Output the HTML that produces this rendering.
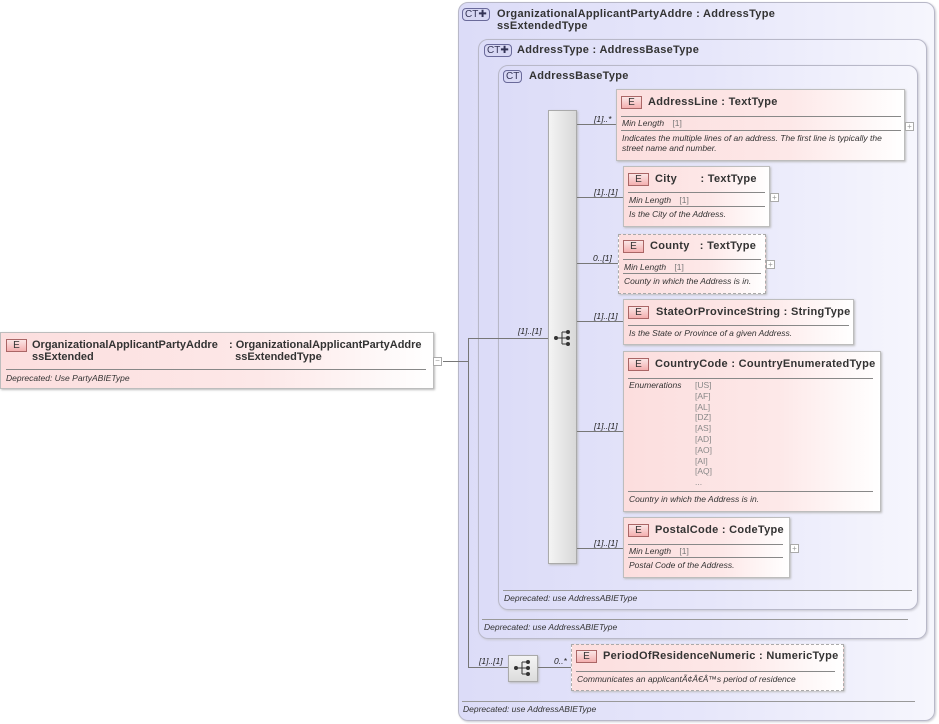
<!DOCTYPE html>
<html><head><meta charset="utf-8">
<style>
*{box-sizing:border-box;margin:0;padding:0}
body{width:939px;height:724px;background:#fff;position:relative;overflow:hidden;font-family:"Liberation Sans",Arial,sans-serif;color:#333}
.a{position:absolute}
.ct{position:absolute;border:1px solid #b8b8c8;border-radius:10px;background:linear-gradient(90deg,#dcdcf8 0%,#e6e6fa 50%,#f6f6fd 100%);box-shadow:1px 1px 2px #c8c8d0}
.badge{position:absolute;height:13px;border:1px solid #6a6a9a;border-radius:4px;background:#d8d8f4;font-size:10px;line-height:11px;color:#335;padding:0 2px}
.t{position:absolute;font-size:11px;font-weight:bold;color:#333;line-height:12px;white-space:nowrap;letter-spacing:0.3px}
.el{position:absolute;border:1px solid #bdbdbd;background:linear-gradient(90deg,#fcdede 0%,#fde8e8 60%,#fff 100%);box-shadow:1px 1px 2px #bbb}
.dash{border:1px dashed #aaa}
.eb{position:absolute;width:21px;height:13px;border:1px solid #a66;background:linear-gradient(#fbe6e6,#f4b0b0);font-size:10px;line-height:11px;text-align:center;color:#333}
.hl{position:absolute;height:1px;background:#888}
.i{position:absolute;font-size:8.5px;font-style:italic;color:#333;white-space:nowrap;line-height:10px}
.g{position:absolute;font-size:8.5px;color:#888;line-height:10.8px}
.ln{position:absolute;background:#777}
.m{position:absolute;font-size:8.5px;font-style:italic;color:#222;white-space:nowrap}
.pl{position:absolute;width:9px;height:9px;border:1px solid #aaa;background:#fff;font-size:8px;line-height:7px;text-align:center;color:#999}
.ft{position:absolute;font-size:8.5px;font-style:italic;color:#333}
</style></head><body>

<div class="ct" style="left:458px;top:2px;width:477px;height:719px"></div>
<div class="badge" style="left:462px;top:8px">CT✚</div>
<div class="t" style="left:497px;top:8px">OrganizationalApplicantPartyAddre : AddressType<br>ssExtendedType</div>

<div class="ct" style="left:478px;top:39px;width:449px;height:600px"></div>
<div class="badge" style="left:484px;top:44px">CT✚</div>
<div class="t" style="left:517px;top:44px">AddressType : AddressBaseType</div>

<div class="ct" style="left:498px;top:65px;width:420px;height:545px"></div>
<div class="badge" style="left:503px;top:70px">CT</div>
<div class="t" style="left:529px;top:70px">AddressBaseType</div>

<div class="hl" style="left:503px;top:590px;width:409px;background:#999"></div>
<div class="ft" style="left:504px;top:593px">Deprecated: use AddressABIEType</div>
<div class="hl" style="left:482px;top:619px;width:426px;background:#999"></div>
<div class="ft" style="left:484px;top:622px">Deprecated: use AddressABIEType</div>
<div class="hl" style="left:462px;top:701px;width:453px;background:#999"></div>
<div class="ft" style="left:463px;top:704px">Deprecated: use AddressABIEType</div>

<div class="a" style="left:548px;top:110px;width:29px;height:454px;border:1px solid #aaa;background:linear-gradient(90deg,#f4f4f4,#d8d8d8);box-shadow:1px 1px 2px #bbb"></div>
<svg class="a" style="left:553px;top:329px" width="20" height="18" viewBox="0 0 20 18"><circle cx="3" cy="9" r="2" fill="#333"/><line x1="3" y1="9" x2="9" y2="9" stroke="#333"/><line x1="9" y1="3" x2="9" y2="15" stroke="#333"/><line x1="9" y1="3" x2="15" y2="3" stroke="#333"/><line x1="9" y1="9" x2="15" y2="9" stroke="#333"/><line x1="9" y1="15" x2="15" y2="15" stroke="#333"/><circle cx="15" cy="3" r="2" fill="#333"/><circle cx="15" cy="9" r="2" fill="#333"/><circle cx="15" cy="15" r="2" fill="#333"/></svg>

<div class="ln" style="left:577px;top:124px;width:39px;height:1px"></div><div class="m" style="left:594px;top:114px">[1]..*</div>
<div class="ln" style="left:577px;top:197px;width:46px;height:1px"></div><div class="m" style="left:594px;top:187px">[1]..[1]</div>
<div class="ln" style="left:577px;top:263px;width:41px;height:1px"></div><div class="m" style="left:593px;top:253px">0..[1]</div>
<div class="ln" style="left:577px;top:321px;width:46px;height:1px"></div><div class="m" style="left:594px;top:311px">[1]..[1]</div>
<div class="ln" style="left:577px;top:431px;width:46px;height:1px"></div><div class="m" style="left:594px;top:421px">[1]..[1]</div>
<div class="ln" style="left:577px;top:548px;width:46px;height:1px"></div><div class="m" style="left:594px;top:538px">[1]..[1]</div>

<div class="el" style="left:616px;top:89px;width:289px;height:72px"></div>
<div class="eb" style="left:621px;top:96px">E</div>
<div class="t" style="left:648px;top:96px">AddressLine : TextType</div>
<div class="hl" style="left:621px;top:116px;width:280px"></div>
<div class="i" style="left:622px;top:118px">Min Length <span style="font-style:normal;color:#777;margin-left:6px">[1]</span></div>
<div class="hl" style="left:621px;top:130px;width:280px"></div>
<div class="i" style="left:622px;top:133px">Indicates the multiple lines of an address. The first line is typically the<br>street name and number.</div>
<div class="pl" style="left:905px;top:122px">+</div>

<div class="el" style="left:623px;top:166px;width:147px;height:61px"></div>
<div class="eb" style="left:628px;top:173px">E</div>
<div class="t" style="left:655px;top:173px">City&nbsp;&nbsp;&nbsp;&nbsp;&nbsp;&nbsp;&nbsp;: TextType</div>
<div class="hl" style="left:628px;top:192px;width:137px"></div>
<div class="i" style="left:629px;top:195px">Min Length <span style="font-style:normal;color:#777;margin-left:6px">[1]</span></div>
<div class="hl" style="left:628px;top:206px;width:137px"></div>
<div class="i" style="left:629px;top:209px">Is the City of the Address.</div>
<div class="pl" style="left:770px;top:193px">+</div>

<div class="el dash" style="left:618px;top:234px;width:148px;height:60px"></div>
<div class="eb" style="left:623px;top:240px">E</div>
<div class="t" style="left:650px;top:240px">County&nbsp;&nbsp;&nbsp;: TextType</div>
<div class="hl" style="left:623px;top:259px;width:138px"></div>
<div class="i" style="left:624px;top:262px">Min Length <span style="font-style:normal;color:#777;margin-left:6px">[1]</span></div>
<div class="hl" style="left:623px;top:273px;width:138px"></div>
<div class="i" style="left:624px;top:276px">County in which the Address is in.</div>
<div class="pl" style="left:766px;top:260px">+</div>

<div class="el" style="left:623px;top:299px;width:231px;height:46px"></div>
<div class="eb" style="left:628px;top:306px">E</div>
<div class="t" style="left:656px;top:306px">StateOrProvinceString : StringType</div>
<div class="hl" style="left:628px;top:325px;width:221px"></div>
<div class="i" style="left:629px;top:328px">Is the State or Province of a given Address.</div>

<div class="el" style="left:623px;top:351px;width:258px;height:161px"></div>
<div class="eb" style="left:628px;top:358px">E</div>
<div class="t" style="left:655px;top:358px">CountryCode : CountryEnumeratedType</div>
<div class="hl" style="left:628px;top:378px;width:245px"></div>
<div class="i" style="left:629px;top:380px">Enumerations</div>
<div class="g" style="left:695px;top:380px">[US]<br>[AF]<br>[AL]<br>[DZ]<br>[AS]<br>[AD]<br>[AO]<br>[AI]<br>[AQ]<br>...</div>
<div class="hl" style="left:628px;top:491px;width:245px"></div>
<div class="i" style="left:629px;top:494px">Country in which the Address is in.</div>

<div class="el" style="left:623px;top:517px;width:167px;height:61px"></div>
<div class="eb" style="left:628px;top:524px">E</div>
<div class="t" style="left:655px;top:524px">PostalCode : CodeType</div>
<div class="hl" style="left:628px;top:544px;width:155px"></div>
<div class="i" style="left:629px;top:546px">Min Length <span style="font-style:normal;color:#777;margin-left:6px">[1]</span></div>
<div class="hl" style="left:628px;top:557px;width:155px"></div>
<div class="i" style="left:629px;top:560px">Postal Code of the Address.</div>
<div class="pl" style="left:790px;top:544px">+</div>

<div class="el" style="left:0px;top:332px;width:434px;height:57px"></div>
<div class="eb" style="left:6px;top:339px">E</div>
<div class="t" style="left:32px;top:339px;letter-spacing:0">OrganizationalApplicantPartyAddre<br>ssExtended</div>
<div class="t" style="left:229px;top:339px;letter-spacing:0">: OrganizationalApplicantPartyAddre<br>&nbsp;&nbsp;ssExtendedType</div>
<div class="hl" style="left:6px;top:369px;width:420px"></div>
<div class="i" style="left:6px;top:373px">Deprecated: Use PartyABIEType</div>
<div class="pl" style="left:433px;top:357px;line-height:6px">−</div>

<div class="ln" style="left:443px;top:361px;width:25px;height:1px"></div>
<div class="ln" style="left:468px;top:338px;width:1px;height:330px"></div>
<div class="ln" style="left:468px;top:338px;width:80px;height:1px"></div>
<div class="m" style="left:518px;top:326px">[1]..[1]</div>
<div class="ln" style="left:468px;top:667px;width:40px;height:1px"></div>
<div class="m" style="left:479px;top:656px">[1]..[1]</div>

<div class="a" style="left:508px;top:655px;width:30px;height:27px;border:1px solid #aaa;background:linear-gradient(#f4f4f4,#dcdcdc);box-shadow:1px 1px 2px #bbb"></div>
<svg class="a" style="left:513px;top:659px" width="20" height="18" viewBox="0 0 20 18"><circle cx="3" cy="9" r="2" fill="#333"/><line x1="3" y1="9" x2="9" y2="9" stroke="#333"/><line x1="9" y1="3" x2="9" y2="15" stroke="#333"/><line x1="9" y1="9" x2="15" y2="9" stroke="#333"/><line x1="9" y1="3" x2="15" y2="3" stroke="#333"/><line x1="9" y1="15" x2="15" y2="15" stroke="#333"/><circle cx="15" cy="3" r="2" fill="#333"/><circle cx="15" cy="9" r="2" fill="#333"/><circle cx="15" cy="15" r="2" fill="#333"/></svg>
<div class="ln" style="left:538px;top:667px;width:33px;height:1px"></div>
<div class="m" style="left:554px;top:656px">0..*</div>

<div class="el dash" style="left:571px;top:644px;width:273px;height:47px"></div>
<div class="eb" style="left:576px;top:650px">E</div>
<div class="t" style="left:603px;top:650px">PeriodOfResidenceNumeric : NumericType</div>
<div class="hl" style="left:576px;top:671px;width:259px"></div>
<div class="i" style="left:577px;top:674px">Communicates an applicantÃ¢Â€Â™s period of residence</div>

</body></html>
